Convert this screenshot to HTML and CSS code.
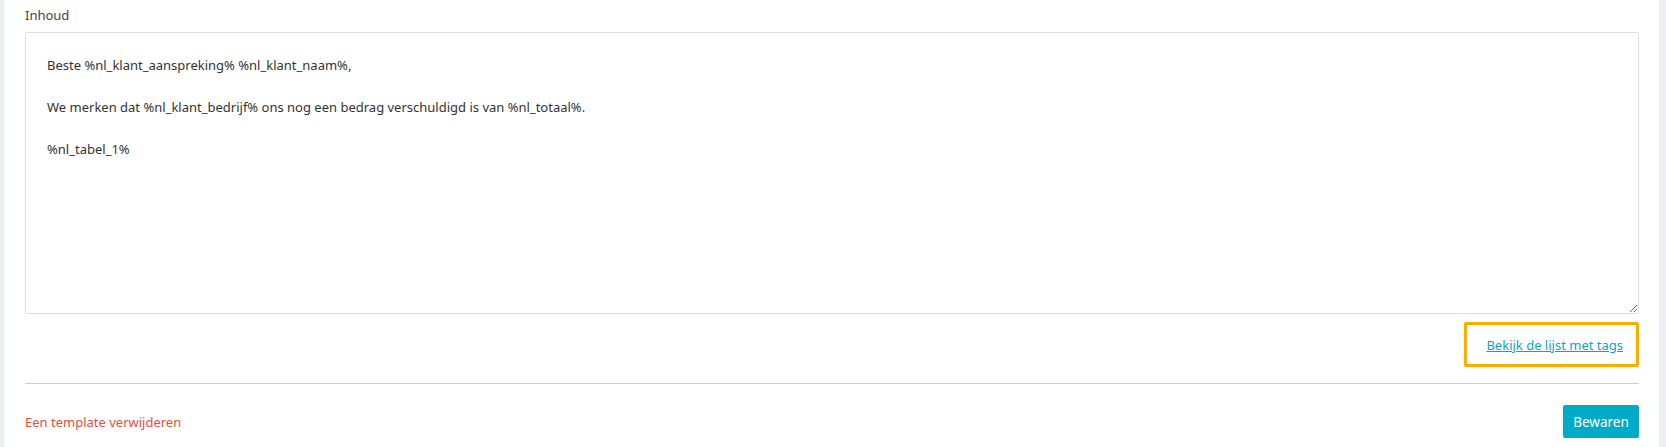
FILE: index.html
```html
<!DOCTYPE html>
<html lang="nl">
<head>
<meta charset="utf-8">
<title>Template</title>
<link rel="stylesheet" href="styles.css">
</head>
<body>
<div class="page">
  <section class="panel">
    <label class="field-label" for="inhoud">Inhoud</label>
    <textarea id="inhoud" class="editor">Beste %nl_klant_aanspreking% %nl_klant_naam%,

We merken dat %nl_klant_bedrijf% ons nog een bedrag verschuldigd is van %nl_totaal%.

%nl_tabel_1%</textarea>
    <div class="tags-row">
      <div class="tags-highlight"><a href="#" class="tags-link">Bekijk de lijst met tags</a></div>
    </div>
    <hr class="divider">
    <div class="footer">
      <a href="#" class="delete-link">Een template verwijderen</a>
      <button type="button" class="save-btn">Bewaren</button>
    </div>
  </section>
</div>
</body>
</html>
```
FILE: styles.css
```css
html, body {
  margin: 0;
  padding: 0;
}
body {
  background: #eceff3;
  font-family: "Noto Sans", "Open Sans", sans-serif;
  font-size: 13px;
  color: #333;
}
.page {
  display: flex;
  padding-left: 4px;
  height: 447px;
  overflow: hidden;
}
.panel {
  width: 1655px;
  box-sizing: border-box;
  background: #fff;
  padding: 5px 20px 0 21px;
  display: flex;
  flex-direction: column;
}
.field-label {
  display: block;
  line-height: 20px;
  color: #444;
  margin-bottom: 7px;
}
.editor {
  display: block;
  width: 100%;
  height: 282px;
  box-sizing: border-box;
  border: 1px solid #dcdfe4;
  border-radius: 2px;
  padding: 22px 21px;
  font-family: inherit;
  font-size: 13px;
  line-height: 21px;
  color: #333;
  resize: both;
  outline: none;
  margin: 0;
}
.tags-row {
  display: flex;
  justify-content: flex-end;
  margin-top: 8px;
}
.tags-highlight {
  border: 3px solid #ffab00;
  border-radius: 2px;
  height: 39px;
  padding: 0 13px 0 19px;
  display: flex;
  align-items: center;
}
.tags-link {
  color: #0aa6c9;
  text-decoration: underline;
  padding-top: 1px;
}
.divider {
  border: 0;
  border-top: 1px solid #cfcfcf;
  margin: 16px 0 0;
  height: 0;
}
.footer {
  display: flex;
  justify-content: space-between;
  align-items: center;
  margin-top: 21px;
}
.delete-link {
  color: #ef4b3a;
  text-decoration: none;
}
.save-btn {
  background: #00abc8;
  color: #fff;
  border: 0;
  border-radius: 2px;
  height: 33px;
  width: 76px;
  font-family: inherit;
  font-size: 13.5px;
  padding: 0;
}
```
